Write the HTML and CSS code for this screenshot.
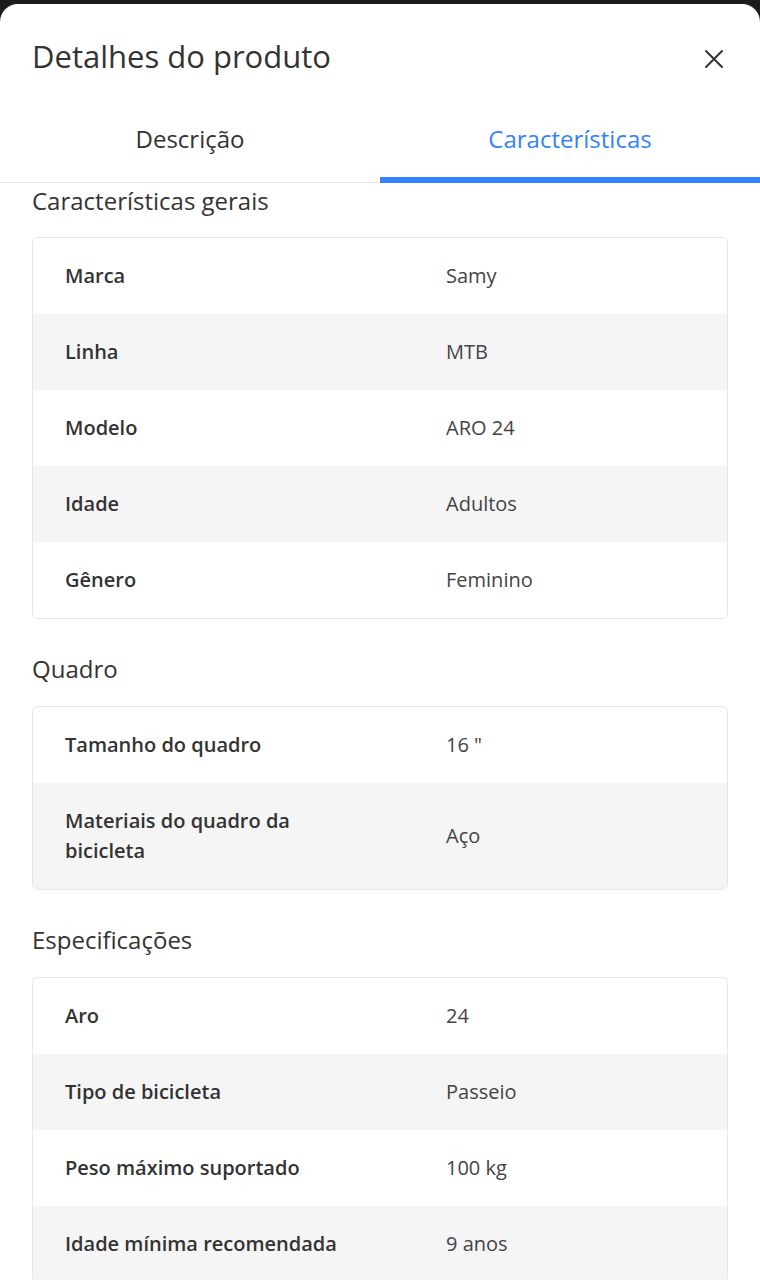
FILE: index.html
```html
<!DOCTYPE html>
<html lang="pt-BR">
<head>
    <meta charset="UTF-8">
    <meta name="viewport" content="width=device-width, initial-scale=1.0">
    <title>Detalhes do produto</title>
    <link rel="stylesheet" href="styles.css">
</head>
<body>
    <div class="sheet">
        <header class="sheet-header">
            <h1>Detalhes do produto</h1>
            <button class="close-button" aria-label="Fechar">
                <svg width="20" height="20" viewBox="0 0 20 20">
                    <path d="M2 2 L18 18 M18 2 L2 18" stroke="#333" stroke-width="2" stroke-linecap="round" fill="none"/>
                </svg>
            </button>
        </header>

        <nav class="tabs">
            <a href="#" class="tab">Descrição</a>
            <a href="#" class="tab active">Características</a>
        </nav>

        <section class="specs">
            <h2 class="specs-title first">Características gerais</h2>
            <div class="specs-table">
                <div class="row"><div class="label">Marca</div><div class="value">Samy</div></div>
                <div class="row"><div class="label">Linha</div><div class="value">MTB</div></div>
                <div class="row"><div class="label">Modelo</div><div class="value">ARO 24</div></div>
                <div class="row"><div class="label">Idade</div><div class="value">Adultos</div></div>
                <div class="row"><div class="label">Gênero</div><div class="value">Feminino</div></div>
            </div>

            <h2 class="specs-title">Quadro</h2>
            <div class="specs-table">
                <div class="row"><div class="label">Tamanho do quadro</div><div class="value">16 "</div></div>
                <div class="row"><div class="label">Materiais do quadro da bicicleta</div><div class="value">Aço</div></div>
            </div>

            <h2 class="specs-title">Especificações</h2>
            <div class="specs-table">
                <div class="row"><div class="label">Aro</div><div class="value">24</div></div>
                <div class="row"><div class="label">Tipo de bicicleta</div><div class="value">Passeio</div></div>
                <div class="row"><div class="label">Peso máximo suportado</div><div class="value">100 kg</div></div>
                <div class="row"><div class="label">Idade mínima recomendada</div><div class="value">9 anos</div></div>
            </div>
        </section>
    </div>
</body>
</html>
```

FILE: styles.css
```css
body {
    margin: 0;
    padding: 4px 0 0 0;
    background-color: #1c1c1c;
    font-family: "Open Sans", Lato, Arial, sans-serif;
    color: #333;
    overflow: hidden;
}

.sheet {
    background-color: #ffffff;
    border-radius: 18px 18px 0 0;
    min-height: 1276px;
}

.sheet-header {
    display: flex;
    justify-content: space-between;
    align-items: center;
    padding: 33px 36px 0 32px;
    height: 38px;
}

.sheet-header h1 {
    margin: 0;
    font-size: 31px;
    font-weight: 400;
    color: #333;
}

.close-button {
    background: none;
    border: none;
    padding: 0;
    margin-top: 6px;
    width: 20px;
    height: 20px;
    cursor: pointer;
}

.tabs {
    display: flex;
    margin-top: 39px;
    border-bottom: 1px solid #e6e6e6;
}

.tab {
    flex: 1;
    text-align: center;
    font-size: 24px;
    line-height: 30px;
    padding: 10px 0 23px 0;
    color: #333;
    text-decoration: none;
    border-bottom: 6px solid transparent;
    margin-bottom: -1px;
}

.tab.active {
    color: #3483fa;
    border-bottom-color: #3483fa;
    border-radius: 6px 6px 0 0;
}

.specs {
    padding: 0 32px;
}

.specs-title {
    margin: 35px 0 22px 0;
    font-size: 24px;
    line-height: 30px;
    font-weight: 400;
    color: #333;
}

.specs-title.first {
    margin-top: 3px;
    margin-bottom: 21px;
}

.specs-table {
    border: 1px solid #e6e6e6;
    border-radius: 6px;
    overflow: hidden;
}

.row {
    display: flex;
    align-items: center;
    font-size: 20px;
    line-height: 30px;
    padding: 23px 0;
}

.row:nth-child(even) {
    background-color: #f5f5f5;
}

.label {
    width: 301px;
    padding: 0 80px 0 32px;
    font-weight: 600;
    color: #333;
}

.value {
    flex: 1;
    color: #444;
}
```
